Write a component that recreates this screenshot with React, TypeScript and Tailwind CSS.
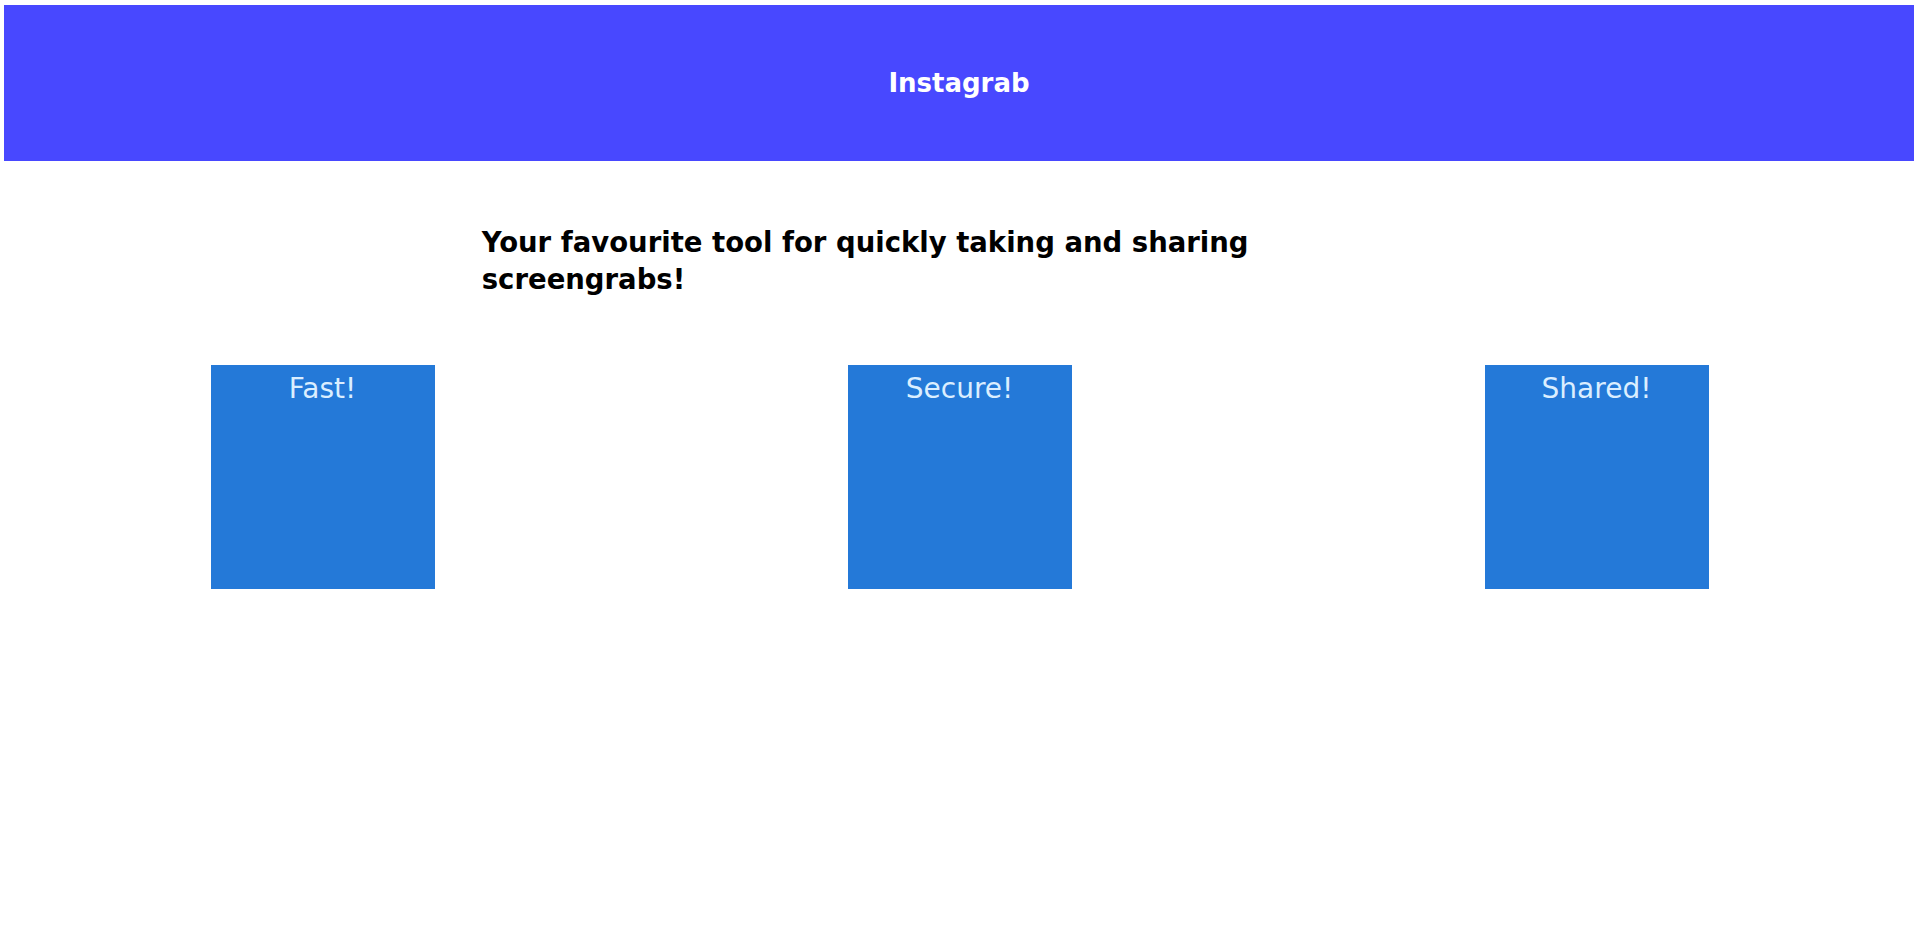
import React from "react";

const features = ["Fast!", "Secure!", "Shared!"];

export default function App() {
  return (
    <div className="min-h-screen bg-white font-['DejaVu_Sans',sans-serif] pt-[5px] px-[4px]">
      <header className="h-[156px] w-[1910px] bg-[#4848ff] flex items-center justify-center">
        <h1 className="text-white text-[26px] font-bold">Instagrab</h1>
      </header>

      <p className="w-1/2 mx-auto mt-[63px] text-[27.5px] leading-[37px] font-bold text-black">
        Your favourite tool for quickly taking and sharing screengrabs!
      </p>

      <div className="grid grid-cols-3 mt-[67px]">
        {features.map((f) => (
          <div key={f} className="flex justify-center">
            <div className="w-[224px] h-[224px] bg-[#2479d8] pt-[5px] text-center text-[#dbeeff] text-[28px] leading-[37px]">
              {f}
            </div>
          </div>
        ))}
      </div>
    </div>
  );
}
